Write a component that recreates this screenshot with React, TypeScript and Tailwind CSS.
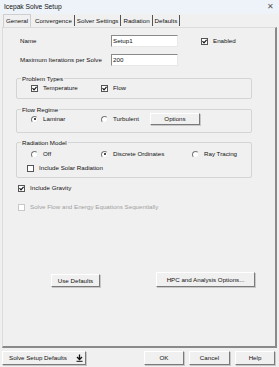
import React from 'react';

const Check = ({ checked = false, disabled = false }: { checked?: boolean; disabled?: boolean }) => (
  <span
    className={`inline-flex items-center justify-center w-[7px] h-[7px] border ${disabled ? 'border-[#c8c8c8]' : 'border-[#555]'} bg-white mr-[5px] shrink-0`}
  >
    {checked && (
      <svg width="5" height="5" viewBox="0 0 5 5">
        <path d="M0.5 2.2 L2 3.8 L4.6 0.8" stroke="#111" strokeWidth="1.2" fill="none" />
      </svg>
    )}
  </span>
);

const Radio = ({ checked = false }: { checked?: boolean }) => (
  <span className="relative inline-block w-[7px] h-[7px] rounded-full border border-t-[#777] border-l-[#777] border-b-[#eee] border-r-[#eee] bg-white mr-[5px] shrink-0">
    {checked && <span className="absolute left-[1.5px] top-[1.5px] w-[2px] h-[2px] rounded-full bg-[#111]" />}
  </span>
);

const Btn = ({ children, className = '' }: { children: React.ReactNode; className?: string }) => (
  <div
    className={`flex items-center justify-center whitespace-nowrap bg-[#f0f0f0] border border-t-white border-l-white border-b-[#7a7a7a] border-r-[#7a7a7a] shadow-[1px_1px_0_#c8c8c8] ${className}`}
  >
    {children}
  </div>
);

const Group = ({ title, className = '', children }: { title: string; className?: string; children: React.ReactNode }) => (
  <div className={`relative w-[236px] border border-[#d4d4d4] rounded-[2px] pl-[14px] ${className}`}>
    <span className="absolute -top-[4px] left-[4px] px-[1px] bg-[#f0f0f0] leading-[7px]">{title}</span>
    {children}
  </div>
);

const Input = ({ value }: { value: string }) => (
  <div className="w-[67px] h-[12px] bg-white border border-t-[#8a8a8a] border-l-[#8a8a8a] border-b-[#e8e8e8] border-r-[#e8e8e8] leading-[10px] pl-[1px]">
    {value}
  </div>
);

const tabs = ['General', 'Convergence', 'Solver Settings', 'Radiation', 'Defaults'];

export default function App() {
  return (
    <div
      className="w-[279px] h-[367px] bg-[#f0f0f0] flex flex-col text-[#111] text-[6.2px] leading-[8px] whitespace-nowrap overflow-hidden"
      style={{ fontFamily: '"Liberation Sans", Arial, sans-serif' }}
    >
      {/* title bar */}
      <div className="h-[14px] bg-[#eef3f9] flex items-center justify-between pl-[4px] pr-[5px] shrink-0">
        <span className="text-[6.7px]">Icepak Solve Setup</span>
        <span className="text-[8px] text-[#555]">✕</span>
      </div>

      {/* tabs */}
      <div className="h-[13px] flex items-end pl-[3px] shrink-0">
        {tabs.map((t, i) => (
          <div
            key={t}
            className={
              i === 0
                ? 'h-[13px] flex items-center px-[2px] mr-[2px] bg-[#f0f0f0] border border-b-0 border-[#cfcfcf]'
                : 'h-[11px] flex items-center px-[2px] mb-[1px] border-r border-[#555]'
            }
          >
            {t}
          </div>
        ))}
      </div>

      {/* tab page */}
      <div className="flex-1 mx-[2px] border border-t-[#dcdcdc] border-l-[#dcdcdc] border-r-[2px] border-r-[#8a8a8a] border-b-[2px] border-b-[#8a8a8a] flex flex-col pl-[13px]">
        <div className="flex items-center mt-[7px] h-[12px]">
          <span className="w-[95px] pl-[4px]">Name</span>
          <Input value="Setup1" />
          <span className="ml-[23px] flex items-center">
            <Check checked />
            Enabled
          </span>
        </div>
        <div className="flex items-center mt-[7px] h-[12px]">
          <span className="w-[95px] pl-[4px]">Maximum Iterations per Solve</span>
          <Input value="200" />
        </div>

        <Group title="Problem Types" className="mt-[12px] h-[21px]">
          <div className="flex items-center mt-[5px]">
            <span className="w-[70px] flex items-center">
              <Check checked />
              Temperature
            </span>
            <span className="flex items-center">
              <Check checked />
              Flow
            </span>
          </div>
        </Group>

        <Group title="Flow Regime" className="mt-[10px] h-[24px]">
          <div className="flex items-center mt-[3px]">
            <span className="w-[70px] flex items-center">
              <Radio checked />
              Laminar
            </span>
            <span className="w-[49px] flex items-center">
              <Radio />
              Turbulent
            </span>
            <Btn className="w-[50px] h-[12px]">Options</Btn>
          </div>
        </Group>

        <Group title="Radiation Model" className="mt-[9px] h-[36px]">
          <div className="flex items-center mt-[7px]">
            <span className="w-[70px] flex items-center">
              <Radio />
              Off
            </span>
            <span className="w-[91px] flex items-center">
              <Radio checked />
              Discrete Ordinates
            </span>
            <span className="flex items-center">
              <Radio />
              Ray Tracing
            </span>
          </div>
          <div className="flex items-center mt-[6px] -ml-[4px]">
            <Check />
            Include Solar Radiation
          </div>
        </Group>

        <div className="flex items-center mt-[6px] pl-[2px]">
          <Check checked />
          Include Gravity
        </div>
        <div className="flex items-center mt-[11px] pl-[2px] text-[#a0a0a0]">
          <Check disabled />
          Solve Flow and Energy Equations Sequentially
        </div>

        <div className="flex items-center mt-[61px]">
          <Btn className="w-[49px] h-[13px] ml-[35px] mt-[2px]">Use Defaults</Btn>
          <Btn className="w-[99px] h-[15px] ml-[56px]">HPC and Analysis Options...</Btn>
        </div>
      </div>

      {/* bottom bar */}
      <div className="h-[19px] flex items-center pl-[2px] pr-[4px] shrink-0">
        <Btn className="w-[84px] h-[14px] !justify-start pl-[6px]">
          <span>Solve Setup Defaults</span>
          <svg width="7" height="8" viewBox="0 0 7 8" className="ml-[9px]">
            <path d="M3.5 0.5 L3.5 5 M1 3 L3.5 5.5 L6 3" stroke="#111" strokeWidth="1.3" fill="none" />
            <path d="M0.5 7.3 L6.5 7.3" stroke="#111" strokeWidth="1" />
          </svg>
        </Btn>
        <div className="flex-1" />
        <Btn className="w-[40px] h-[14px]">OK</Btn>
        <Btn className="w-[41px] h-[14px] ml-[5px]">Cancel</Btn>
        <Btn className="w-[40px] h-[14px] ml-[5px]">Help</Btn>
      </div>
    </div>
  );
}
